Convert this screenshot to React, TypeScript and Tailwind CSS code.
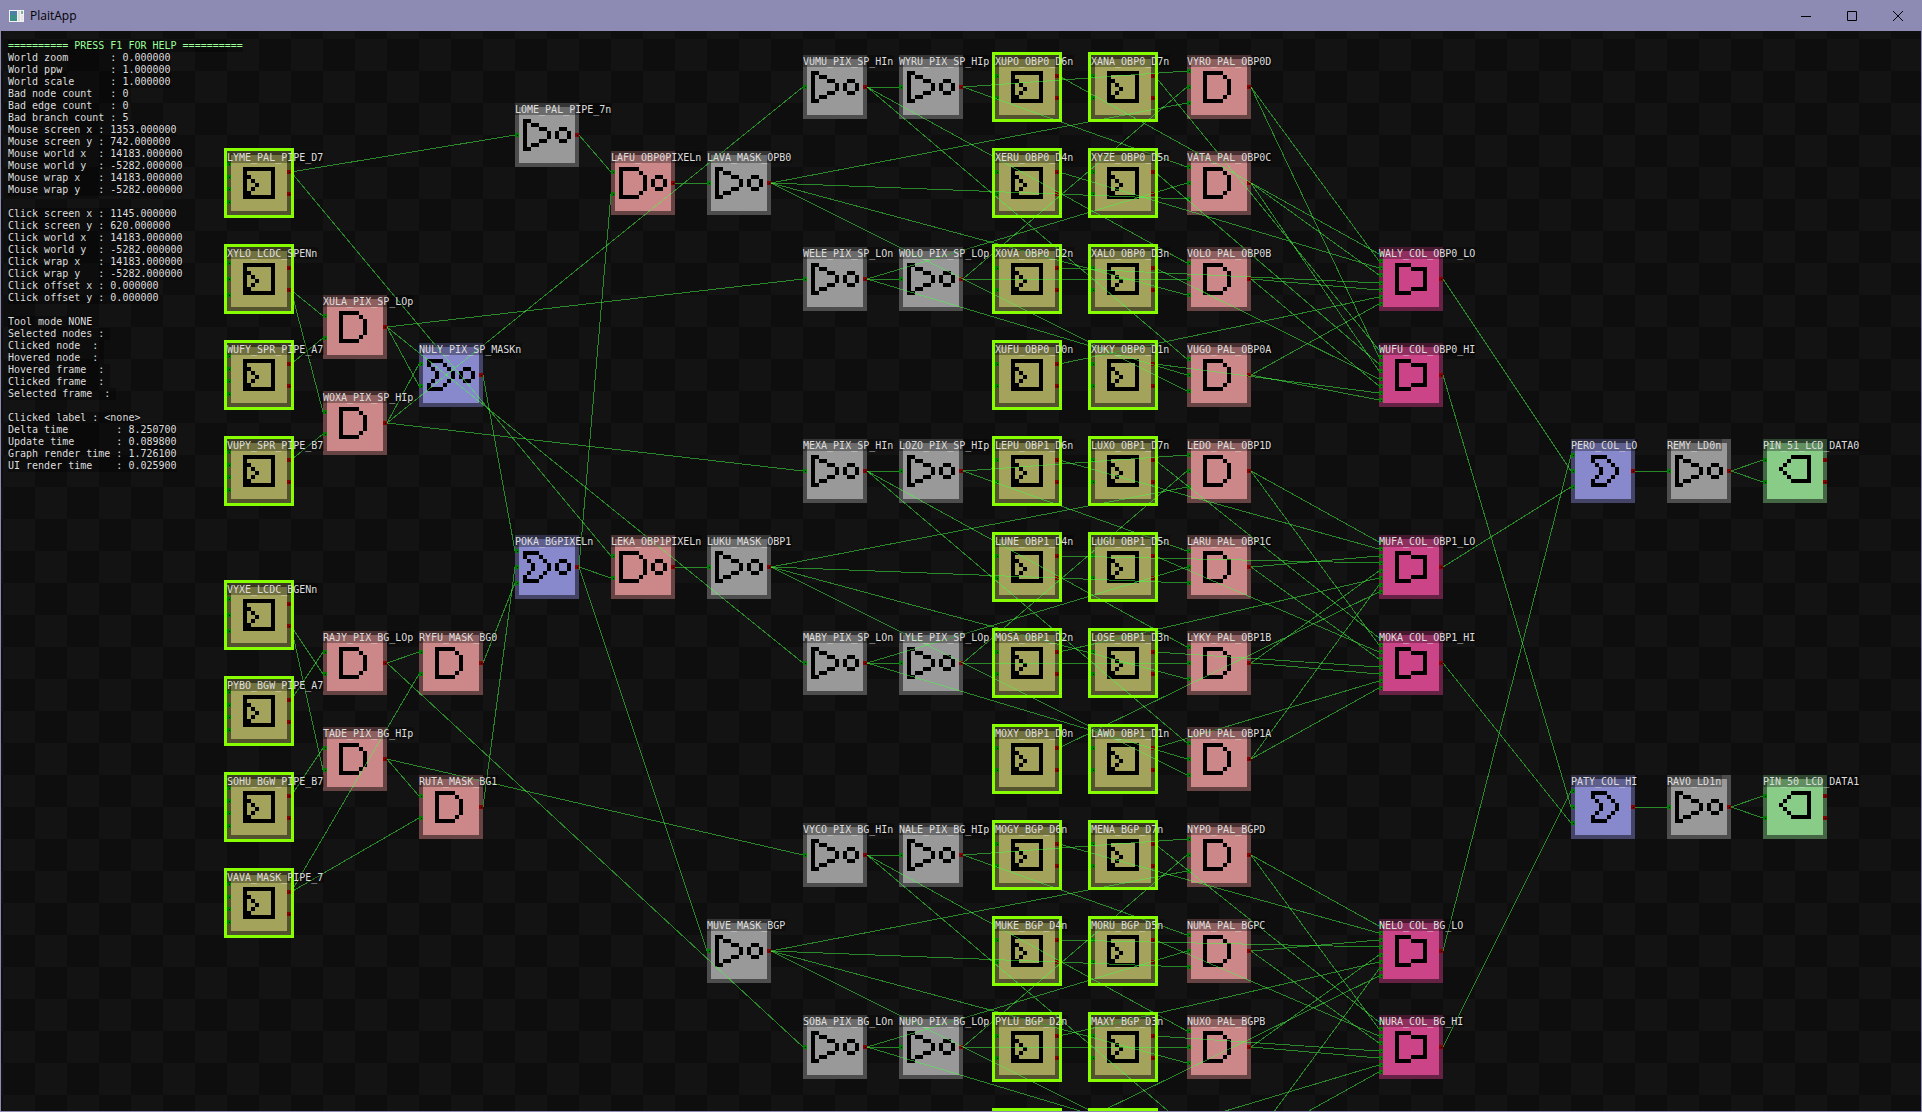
import React from "react";

type Kind = "reg" | "and" | "nand" | "not" | "or" | "nor" | "mux" | "pin";

interface GateNode {
  name: string;
  kind: Kind;
  gx: number;
  gy: number;
  ins: number;
}

const SIZE = 64;
const UNIT = 16;
const CHAR = 6;
const px = (gx: number) => 2 + gx * UNIT;
const py = (gy: number) => 8 + gy * UNIT;

const FILL: Record<Kind, string> = {
  reg: "bg-[#a3a35c] border-[#52522e]",
  and: "bg-[#cc8888] border-[#664444]",
  nand: "bg-[#cc8888] border-[#664444]",
  not: "bg-[#999999] border-[#4d4d4d]",
  or: "bg-[#8888cc] border-[#444466]",
  nor: "bg-[#8888cc] border-[#444466]",
  mux: "bg-[#cc4488] border-[#662244]",
  pin: "bg-[#88cc88] border-[#446644]",
};

/* Glyph bitmaps: one character per 4px cell, placed from cell row 4. */
const GLYPH: Record<Kind, { at: number; rows: string[] }> = {
  reg: {
    at: 4,
    rows: ["XXXXXXXX", "X......X", "XX.....X", "X.X....X", "X..X...X", "X.X....X", "XX.....X", "XXXXXXXX"],
  },
  and: {
    at: 4,
    rows: ["XXXXX", "X....X", "X.....X", "X.....X", "X.....X", "X.....X", "X....X", "XXXXX"],
  },
  nand: {
    at: 2,
    rows: [
      "XXXXX",
      "X....X",
      "X.....X..XX",
      "X.....X.X..X",
      "X.....X.X..X",
      "X.....X..XX",
      "X....X",
      "XXXXX",
    ],
  },
  not: {
    at: 2,
    rows: ["XX", "X.XX", "X...XX...XX", "X.....X.X..X", "X.....X.X..X", "X...XX...XX", "X.XX", "XX"],
  },
  or: {
    at: 5,
    rows: ["XXXX", "X...X", ".X...X", "..X...X", "..X...X", ".X...X", "X...X", "XXXX"],
  },
  nor: {
    at: 2,
    rows: [
      "XXXX",
      "X...X",
      ".X...X...XX",
      "..X...X.X..X",
      "..X...X.X..X",
      ".X...X...XX",
      "X...X",
      "XXXX",
    ],
  },
  mux: {
    at: 4,
    rows: ["XXXX", "X...XXXX", "X......X", "X......X", "X......X", "X......X", "X...XXXX", "XXXX"],
  },
  pin: {
    at: 4,
    rows: ["...XXXXX", "..X....X", ".X.....X", "X......X", ".X.....X", "..X....X", "...XXXXX"],
  },
};

const n = (name: string, kind: Kind, gx: number, gy: number, ins: number): GateNode => ({
  name,
  kind,
  gx,
  gy,
  ins,
});

const NODES: GateNode[] = [
  n("LYME_PAL_PIPE_D7", "reg", 14, 7, 4),
  n("XYLO_LCDC_SPENn", "reg", 14, 13, 3),
  n("WUFY_SPR_PIPE_A7", "reg", 14, 19, 4),
  n("VUPY_SPR_PIPE_B7", "reg", 14, 25, 4),
  n("VYXE_LCDC_BGENn", "reg", 14, 34, 3),
  n("PYBO_BGW_PIPE_A7", "reg", 14, 40, 4),
  n("SOHU_BGW_PIPE_B7", "reg", 14, 46, 4),
  n("VAVA_MASK_PIPE_7", "reg", 14, 52, 4),
  n("XULA_PIX_SP_LOp", "and", 20, 16, 2),
  n("WOXA_PIX_SP_HIp", "and", 20, 22, 2),
  n("RAJY_PIX_BG_LOp", "and", 20, 37, 2),
  n("TADE_PIX_BG_HIp", "and", 20, 43, 2),
  n("NULY_PIX_SP_MASKn", "nor", 26, 19, 2),
  n("RYFU_MASK_BG0", "and", 26, 37, 2),
  n("RUTA_MASK_BG1", "and", 26, 46, 2),
  n("LOME_PAL_PIPE_7n", "not", 32, 4, 1),
  n("POKA_BGPIXELn", "nor", 32, 31, 3),
  n("LAFU_OBP0PIXELn", "nand", 38, 7, 2),
  n("LEKA_OBP1PIXELn", "nand", 38, 31, 2),
  n("LAVA_MASK_OPB0", "not", 44, 7, 1),
  n("LUKU_MASK_OBP1", "not", 44, 31, 1),
  n("MUVE_MASK_BGP", "not", 44, 55, 1),

  n("VUMU_PIX_SP_HIn", "not", 50, 1, 1),
  n("WYRU_PIX_SP_HIp", "not", 56, 1, 1),
  n("WELE_PIX_SP_LOn", "not", 50, 13, 1),
  n("WOLO_PIX_SP_LOp", "not", 56, 13, 1),
  n("MEXA_PIX_SP_HIn", "not", 50, 25, 1),
  n("LOZO_PIX_SP_HIp", "not", 56, 25, 1),
  n("MABY_PIX_SP_LOn", "not", 50, 37, 1),
  n("LYLE_PIX_SP_LOp", "not", 56, 37, 1),
  n("VYCO_PIX_BG_HIn", "not", 50, 49, 1),
  n("NALE_PIX_BG_HIp", "not", 56, 49, 1),
  n("SOBA_PIX_BG_LOn", "not", 50, 61, 1),
  n("NUPO_PIX_BG_LOp", "not", 56, 61, 1),

  n("XUPO_OBP0_D6n", "reg", 62, 1, 2),
  n("XERU_OBP0_D4n", "reg", 62, 7, 2),
  n("XOVA_OBP0_D2n", "reg", 62, 13, 2),
  n("XUFU_OBP0_D0n", "reg", 62, 19, 2),
  n("LEPU_OBP1_D6n", "reg", 62, 25, 2),
  n("LUNE_OBP1_D4n", "reg", 62, 31, 2),
  n("MOSA_OBP1_D2n", "reg", 62, 37, 2),
  n("MOXY_OBP1_D0n", "reg", 62, 43, 2),
  n("MOGY_BGP_D6n", "reg", 62, 49, 2),
  n("MUKE_BGP_D4n", "reg", 62, 55, 2),
  n("PYLU_BGP_D2n", "reg", 62, 61, 2),
  n("PAVO_BGP_D0n", "reg", 62, 67, 2),

  n("XANA_OBP0_D7n", "reg", 68, 1, 2),
  n("XYZE_OBP0_D5n", "reg", 68, 7, 2),
  n("XALO_OBP0_D3n", "reg", 68, 13, 2),
  n("XUKY_OBP0_D1n", "reg", 68, 19, 2),
  n("LUXO_OBP1_D7n", "reg", 68, 25, 2),
  n("LUGU_OBP1_D5n", "reg", 68, 31, 2),
  n("LOSE_OBP1_D3n", "reg", 68, 37, 2),
  n("LAWO_OBP1_D1n", "reg", 68, 43, 2),
  n("MENA_BGP_D7n", "reg", 68, 49, 2),
  n("MORU_BGP_D5n", "reg", 68, 55, 2),
  n("MAXY_BGP_D3n", "reg", 68, 61, 2),
  n("NUSY_BGP_D1n", "reg", 68, 67, 2),

  n("VYRO_PAL_OBP0D", "and", 74, 1, 3),
  n("VATA_PAL_OBP0C", "and", 74, 7, 3),
  n("VOLO_PAL_OBP0B", "and", 74, 13, 3),
  n("VUGO_PAL_OBP0A", "and", 74, 19, 3),
  n("LEDO_PAL_OBP1D", "and", 74, 25, 3),
  n("LARU_PAL_OBP1C", "and", 74, 31, 3),
  n("LYKY_PAL_OBP1B", "and", 74, 37, 3),
  n("LOPU_PAL_OBP1A", "and", 74, 43, 3),
  n("NYPO_PAL_BGPD", "and", 74, 49, 3),
  n("NUMA_PAL_BGPC", "and", 74, 55, 3),
  n("NUXO_PAL_BGPB", "and", 74, 61, 3),
  n("POBY_PAL_BGPA", "and", 74, 67, 3),

  n("WALY_COL_OBP0_LO", "mux", 86, 13, 8),
  n("WUFU_COL_OBP0_HI", "mux", 86, 19, 8),
  n("MUFA_COL_OBP1_LO", "mux", 86, 31, 8),
  n("MOKA_COL_OBP1_HI", "mux", 86, 37, 8),
  n("NELO_COL_BG_LO", "mux", 86, 55, 8),
  n("NURA_COL_BG_HI", "mux", 86, 61, 8),

  n("PERO_COL_LO", "or", 98, 25, 3),
  n("REMY_LD0n", "not", 104, 25, 1),
  n("PIN_51_LCD_DATA0", "pin", 110, 25, 2),
  n("PATY_COL_HI", "or", 98, 46, 3),
  n("RAVO_LD1n", "not", 104, 46, 1),
  n("PIN_50_LCD_DATA1", "pin", 110, 46, 2),
];

/* The last row only peeks in with its frames, so it carries no labels. */
const LAST_ROW = 67;
const LABELLED = NODES.filter((node) => node.gy < LAST_ROW);

/* Each sink lists its drivers in input order; ".1" picks the second output. */
const WIRES: Record<string, string[]> = {
  LOME: ["LYME"],
  XULA: ["XYLO.1", "WUFY"],
  WOXA: ["XYLO.1", "VUPY"],
  RAJY: ["PYBO", "VYXE.1"],
  TADE: ["SOHU", "VYXE.1"],
  NULY: ["WOXA", "XULA"],
  RYFU: ["RAJY", "VAVA"],
  RUTA: ["TADE", "VAVA"],
  POKA: ["NULY", "RUTA", "RYFU"],
  LAFU: ["LOME", "POKA"],
  LEKA: ["LYME", "POKA"],
  LAVA: ["LAFU"],
  LUKU: ["LEKA"],
  MUVE: ["POKA"],
  VUMU: ["WOXA"],
  WYRU: ["VUMU"],
  WELE: ["XULA"],
  WOLO: ["WELE"],
  MEXA: ["WOXA"],
  LOZO: ["MEXA"],
  MABY: ["XULA"],
  LYLE: ["MABY"],
  VYCO: ["TADE"],
  NALE: ["VYCO"],
  SOBA: ["RAJY"],
  NUPO: ["SOBA"],
  VYRO: ["WYRU", "WOLO", "LAVA"],
  VATA: ["WYRU", "WELE", "LAVA"],
  VOLO: ["VUMU", "WOLO", "LAVA"],
  VUGO: ["VUMU", "WELE", "LAVA"],
  LEDO: ["LOZO", "LYLE", "LUKU"],
  LARU: ["LOZO", "MABY", "LUKU"],
  LYKY: ["MEXA", "LYLE", "LUKU"],
  LOPU: ["MEXA", "MABY", "LUKU"],
  NYPO: ["NALE", "NUPO", "MUVE"],
  NUMA: ["NALE", "SOBA", "MUVE"],
  NUXO: ["VYCO", "NUPO", "MUVE"],
  POBY: ["VYCO", "SOBA", "MUVE"],
  WALY: ["XUPO", "VYRO", "XERU", "VATA", "XOVA", "VOLO", "XUFU", "VUGO"],
  WUFU: ["XANA", "VYRO", "XYZE", "VATA", "XALO", "VOLO", "XUKY", "VUGO"],
  MUFA: ["LEDO", "LEPU", "LARU", "LUNE", "LYKY", "MOSA", "LOPU", "MOXY"],
  MOKA: ["LUXO", "LEDO", "LUGU", "LARU", "LOSE", "LYKY", "LAWO", "LOPU"],
  NELO: ["NYPO", "MOGY", "NUMA", "MUKE", "NUXO", "PYLU", "POBY", "PAVO"],
  NURA: ["MENA", "NYPO", "MORU", "NUMA", "MAXY", "NUXO", "NUSY", "POBY"],
  PERO: ["NELO", "WALY", "MUFA"],
  REMY: ["PERO"],
  PIN_51: ["REMY", "REMY"],
  PATY: ["NURA", "WUFU", "MOKA"],
  RAVO: ["PATY"],
  PIN_50: ["RAVO", "RAVO"],
};

const HUD = [
  "World zoom       : 0.000000",
  "World ppw        : 1.000000",
  "World scale      : 1.000000",
  "Bad node count   : 0",
  "Bad edge count   : 0",
  "Bad branch count : 5",
  "Mouse screen x : 1353.000000",
  "Mouse screen y : 742.000000",
  "Mouse world x  : 14183.000000",
  "Mouse world y  : -5282.000000",
  "Mouse wrap x   : 14183.000000",
  "Mouse wrap y   : -5282.000000",
  "",
  "Click screen x : 1145.000000",
  "Click screen y : 620.000000",
  "Click world x  : 14183.000000",
  "Click world y  : -5282.000000",
  "Click wrap x   : 14183.000000",
  "Click wrap y   : -5282.000000",
  "Click offset x : 0.000000",
  "Click offset y : 0.000000",
  "",
  "Tool mode NONE",
  "Selected nodes : ",
  "Clicked node  : ",
  "Hovered node  : ",
  "Hovered frame  : ",
  "Clicked frame  : ",
  "Selected frame  : ",
  "",
  "Clicked label : <none>",
  "Delta time        : 8.250700",
  "Update time       : 0.089800",
  "Graph render time : 1.726100",
  "UI render time    : 0.025900",
];

const byKey = (key: string) => NODES.find((node) => node.name.startsWith(key))!;
const outsOf = (kind: Kind) => (kind === "reg" || kind === "pin" ? 2 : 1);
const portY = (index: number, count: number) => Math.round((SIZE * (index + 1)) / (count + 1));

function Glyph({ kind }: { kind: Kind }) {
  const { at, rows } = GLYPH[kind];
  const d = rows
    .flatMap((row, r) =>
      [...row].map((c, i) => (c === "X" ? `M${(at + i) * 4} ${(4 + r) * 4}h4v4h-4z` : "")),
    )
    .join("");
  return (
    <svg className="absolute -left-1 -top-1 size-16" viewBox="0 0 64 64" shapeRendering="crispEdges" aria-hidden="true">
      <path d={d} fill="#000" />
    </svg>
  );
}

function Ports({ count, side }: { count: number; side: "in" | "out" }) {
  return (
    <>
      {Array.from({ length: count }, (_, i) => (
        <span
          key={i}
          className={
            side === "in"
              ? "absolute -left-1 flex size-1 items-center justify-center bg-[#008000]"
              : "absolute -right-1 flex size-1 items-center justify-center bg-[#880000]"
          }
          style={{ top: portY(i, count) - 6 }}
        >
          <span className="size-px bg-black" />
        </span>
      ))}
    </>
  );
}

function Gate({ node }: { node: GateNode }) {
  return (
    <div
      className={`absolute size-16 border-4 ${FILL[node.kind]}`}
      style={{ left: px(node.gx), top: py(node.gy) }}
    >
      <Glyph kind={node.kind} />
      <Ports count={node.ins} side="in" />
      <Ports count={outsOf(node.kind)} side="out" />
    </div>
  );
}

function Wires() {
  return (
    <svg className="absolute inset-0 size-full" shapeRendering="crispEdges" aria-hidden="true">
      <g stroke="#44ff44" strokeOpacity="0.5" strokeWidth="1">
        {Object.entries(WIRES).flatMap(([sinkKey, sources]) => {
          const sink = byKey(sinkKey);
          return sources.map((source, i) => {
            const [key, out] = source.split(".");
            const from = byKey(key);
            return (
              <line
                key={`${sinkKey}-${i}`}
                x1={px(from.gx) + SIZE}
                y1={py(from.gy) + portY(Number(out ?? 0), outsOf(from.kind))}
                x2={px(sink.gx)}
                y2={py(sink.gy) + portY(i, sink.ins)}
              />
            );
          });
        })}
      </g>
    </svg>
  );
}

function TitleBar() {
  return (
    <header className="flex h-[31px] shrink-0 items-center bg-[#8d8ab4] text-black">
      <svg className="ml-2 h-3 w-[15px]" viewBox="0 0 15 12" aria-hidden="true">
        <rect width="15" height="12" fill="#f2f2f2" />
        <rect x="1" y="1" width="7" height="10" fill="#3c8f86" />
        <rect x="1" y="1" width="7" height="4" fill="#4a7fa8" />
        <rect x="9" y="1" width="2" height="10" fill="#dcdcdc" />
        <rect x="12" y="1" width="2" height="3" fill="#7fb39a" />
        <rect x="12" y="5" width="2" height="6" fill="#e6e6e6" />
      </svg>
      <h1 className="ml-1.5 flex-1 font-['Open_Sans',sans-serif] text-xs">PlaitApp</h1>
      <button type="button" aria-label="Minimize" className="flex h-full w-[46px] items-center justify-center">
        <svg className="size-[10px]" viewBox="0 0 10 10" shapeRendering="crispEdges">
          <path d="M0 5h10v1H0z" />
        </svg>
      </button>
      <button type="button" aria-label="Maximize" className="flex h-full w-[46px] items-center justify-center">
        <svg className="size-[10px]" viewBox="0 0 10 10" fill="none" stroke="#000">
          <path d="M.5 .5h9v9h-9z" />
        </svg>
      </button>
      <button type="button" aria-label="Close" className="flex h-full w-[46px] items-center justify-center">
        <svg className="size-[10px]" viewBox="0 0 10 10" fill="none" stroke="#000">
          <path d="M0 0l10 10M10 0L0 10" />
        </svg>
      </button>
    </header>
  );
}

export default function App() {
  return (
    <div className="flex h-screen flex-col overflow-hidden border-b border-l border-r border-[#8d8ab4] bg-[#0e0e0e]">
      <TitleBar />
      <main className="relative flex-1 overflow-hidden bg-[repeating-conic-gradient(#131313_0_25%,#0e0e0e_0_50%)] bg-[length:64px_64px] bg-[position:34px_-24px] font-['DejaVu_Sans_Mono',monospace] text-[10px] leading-[12px] text-[#dddddd]">
        {NODES.map((node) => (
          <Gate key={node.name} node={node} />
        ))}
        <Wires />
        {LABELLED.map((node) => (
          <div
            key={node.name}
            className="absolute h-3 bg-black/30"
            style={{ left: px(node.gx), top: py(node.gy), width: node.name.length * CHAR + 1 }}
          />
        ))}
        {NODES.filter((node) => node.kind === "reg").map((node) => (
          <div
            key={node.name}
            className="absolute -m-[3px] size-[70px] border-[3px] border-[#88ff00]"
            style={{ left: px(node.gx), top: py(node.gy) }}
          />
        ))}
        {LABELLED.map((node) => (
          <span
            key={node.name}
            className="absolute whitespace-pre pt-px"
            style={{ left: px(node.gx), top: py(node.gy) }}
          >
            {node.name}
          </span>
        ))}
        <section className="relative flex flex-col items-start pl-[7px] pt-[9px]">
          <p className="whitespace-pre bg-black/30 text-[#99ff99]">========== PRESS F1 FOR HELP ==========</p>
          {HUD.map((line, i) => (
            <p key={i} className="min-h-3 whitespace-pre bg-black/30">
              {line}
            </p>
          ))}
        </section>
      </main>
    </div>
  );
}
